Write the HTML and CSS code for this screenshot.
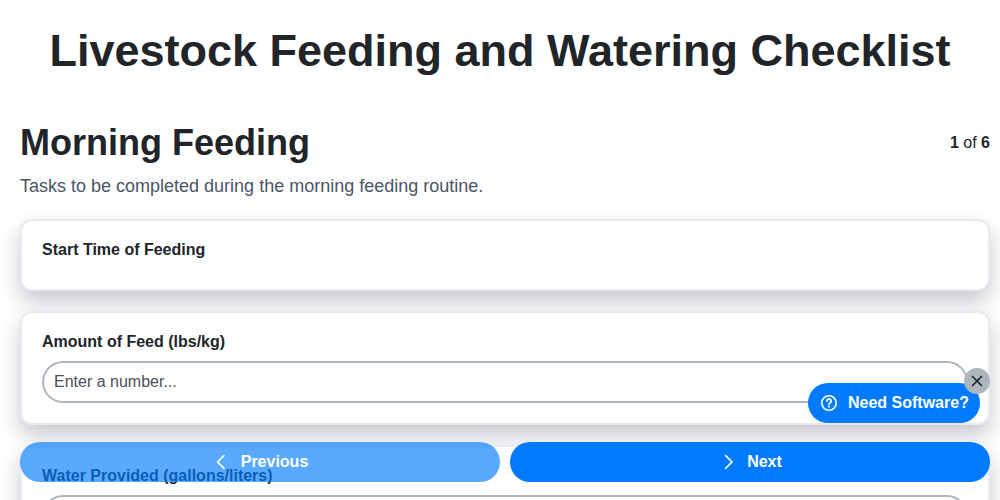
FILE: index.html
```html
<!DOCTYPE html>
<html lang="en">
<head>
  <meta charset="UTF-8" />
  <meta name="viewport" content="width=device-width, initial-scale=1.0"/>
  <title>Livestock Feeding and Watering Checklist</title>
  <link rel="stylesheet" href="styles.css">
</head>
<body>
  <h1>Livestock Feeding and Watering Checklist</h1>
  <div class="seccion">
    <div class="encabezado">
      <h2>Morning Feeding</h2>
      <p class="paso"><b>1</b> of <b>6</b></p>
    </div>
    <p class="descripcion">Tasks to be completed during the morning feeding routine.</p>
    <div class="tarjeta tarjeta-hora">
      <label>Start Time of Feeding</label>
    </div>
    <div class="tarjeta">
      <label for="feed">Amount of Feed (lbs/kg)</label>
      <input type="text" id="feed" placeholder="Enter a number...">
    </div>
    <div class="tarjeta">
      <label for="water">Water Provided (gallons/liters)</label>
      <input type="text" id="water" placeholder="Enter a number...">
    </div>
  </div>
  <div class="navegacion">
    <button class="btn-nav btn-anterior">
      <svg width="18" height="18" viewBox="0 0 18 18" fill="none" stroke="currentColor" stroke-width="1.6" stroke-linecap="round" stroke-linejoin="round"><path d="M12 2.6 5.6 9l6.4 6.4"/></svg>
      Previous
    </button>
    <button class="btn-nav">
      <svg width="18" height="18" viewBox="0 0 18 18" fill="none" stroke="currentColor" stroke-width="1.6" stroke-linecap="round" stroke-linejoin="round"><path d="M7.6 2.6 14 9l-6.4 6.4"/></svg>
      Next
    </button>
  </div>
  <a class="promo">
    <svg width="18" height="18" viewBox="0 0 18 18" fill="none" stroke="currentColor" stroke-width="1.6" stroke-linecap="round"><circle cx="9" cy="9" r="7.2"/><path stroke-width="1.8" d="M6.9 7.1a2.1 2.1 0 1 1 3.2 1.8c-.7.4-1.1.8-1.1 1.5"/><path stroke-width="1.8" d="M9 12.7v.1"/></svg>
    Need Software?
  </a>
  <button class="promo-cerrar" aria-label="Close">
    <svg width="12" height="12" viewBox="0 0 12 12" fill="none" stroke="currentColor" stroke-width="1.7" stroke-linecap="round"><path d="M1.5 1.5l9 9M10.5 1.5l-9 9"/></svg>
  </button>
</body>
</html>
```

FILE: styles.css
```css
html { overflow: hidden; }
body { font-family: "Liberation Sans", Arial, sans-serif; margin: 0; padding: 0 10px 0 20px; background: #fff; color: #212529; }
h1 { font-size: 45px; line-height: 54px; margin: 0 0 0 -10px; padding: 24px 0 0; text-align: center; }
.seccion { margin-top: 43px; }
.encabezado { display: flex; justify-content: space-between; align-items: center; }
h2 { font-size: 36px; line-height: 43px; margin: 0; }
.paso { margin: 0; font-size: 16px; }
.descripcion { margin: 11px 0 0; font-size: 18px; line-height: 22px; color: #4a5568; }
.tarjeta { background: #fff; border: 2px solid #e9e9f0; border-radius: 12px; padding: 19px 20px 20px; margin-bottom: 20px; box-shadow: 0 10px 20px rgba(33,37,60,0.25); }
.tarjeta-hora { height: 72px; box-sizing: border-box; margin-top: 22px; }
label { display: block; font-size: 16px; font-weight: bold; line-height: 19px; margin-bottom: 10px; }
input { display: block; width: 100%; box-sizing: border-box; height: 42px; padding: 0 10px; border: 2px solid #adb5bd; border-radius: 21px; font-family: inherit; font-size: 16px; background: #fff; }
input::placeholder { color: #495057; opacity: 1; }
.navegacion { position: fixed; left: 20px; right: 10px; top: 442px; display: flex; gap: 10px; }
.btn-nav { flex: 1; height: 40px; border: none; border-radius: 20px; background: #007bff; color: #fff; font-family: inherit; font-size: 16px; font-weight: bold; display: flex; align-items: center; justify-content: center; gap: 11px; }
.btn-anterior { opacity: 0.65; }
.promo { position: fixed; left: 808px; top: 383px; width: 172px; height: 40px; box-sizing: border-box; padding-left: 12px; border-radius: 20px; background: #007bff; color: #fff; font-size: 16px; font-weight: bold; display: flex; align-items: center; gap: 10px; }
.promo-cerrar { position: fixed; left: 964px; top: 368px; width: 26px; height: 26px; padding: 0; border: none; border-radius: 50%; background: #adb5bd; color: #212529; display: flex; align-items: center; justify-content: center; }
```
